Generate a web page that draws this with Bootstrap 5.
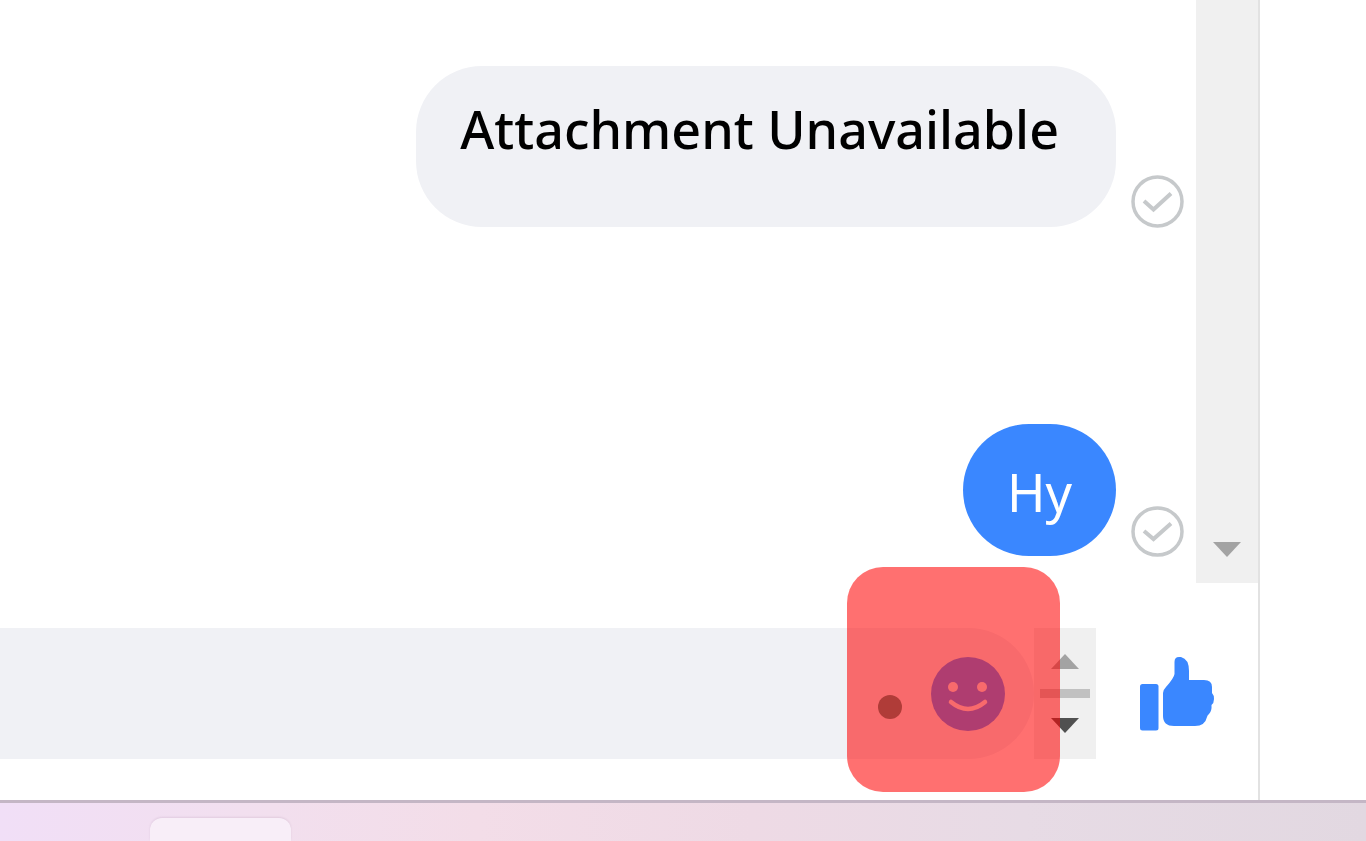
<!DOCTYPE html>
<html lang="en">
<head>
<meta charset="utf-8">
<meta name="viewport" content="width=device-width, initial-scale=1">
<title>Chat</title>
<link rel="stylesheet" href="https://cdn.jsdelivr.net/npm/bootstrap@5.3.0/dist/css/bootstrap.min.css">
<style>
  body { font-family: "Noto Sans", "Open Sans", sans-serif; background: #fff; }
  .chat-panel { border-right: 2px solid #e2e2e2; }
  .side-space { width: 106px; }
  .thread { gap: 197px; padding: 66px 12px 27px 0; }
  .message-line { gap: 15px; }
  .bubble { font-size: 52px; line-height: 72px; padding: 32px 44px 28px; border-radius: 66px; }
  .bubble-grey { background: #f0f1f5; color: #000; font-weight: 500; padding: 27px 57px 62px 44px; }
  .bubble-blue { background: #3a87ff; color: #fff; }
  .sent-mark { width: 53px; height: 53px; flex: none; margin-bottom: -1px; }
  .scroll-track { width: 62px; background: #f0f0f0; padding-bottom: 26px; }
  .composer { padding: 45px 44px 41px 0; }
  .composer-box { height: 131px; background: #f0f1f5; border-radius: 0 66px 66px 0; padding-right: 29px; gap: 29px; }
  .composer-box input { font-size: 52px; min-width: 0; }
  .composer-box input:focus { outline: 0; box-shadow: none; }
  .status-dot { width: 24px; height: 24px; background: #4b8880; margin-top: 27px; flex: none; }
  .box-scroller { width: 62px; height: 131px; background: #f0f0f0; gap: 20px; }
  .scroller-thumb { width: 50px; height: 9px; background: #c1c1c1; }
  .plain-btn { border: 0; padding: 0; background: transparent; line-height: 0; flex: none; }
  .like-btn { margin-left: 44px; }
  .highlight { width: 213px; height: 225px; right: 198px; top: -16px; border-radius: 36px; background: rgba(255,0,0,.56); pointer-events: none; }
  .taskbar { height: 41px; border-top: 3px solid #c4b6c5; padding: 15px 150px 0;
    background: linear-gradient(90deg, #f1dff7 0, #f2dfee 20%, #f3dde8 35%, #eedae5 55%, #e7dbe5 75%, #e2d8e1 100%); }
  .task-tile { width: 141px; border-radius: 12px 12px 0 0; background: #f8eef8; box-shadow: 0 -1px 2px rgba(160,130,160,.2); }
</style>
</head>
<body>
<div class="d-flex flex-column vh-100 overflow-hidden">
  <div class="d-flex flex-grow-1">
    <main class="chat-panel d-flex flex-column flex-grow-1">
      <section class="d-flex flex-grow-1">
        <div class="thread d-flex flex-column justify-content-end flex-grow-1">
          <div class="message-line d-flex justify-content-end align-items-end">
            <div class="bubble bubble-grey">Attachment Unavailable</div>
            <svg class="sent-mark" viewBox="0 0 53 53" fill="none" stroke="#c6c9cb" role="img" aria-label="Sent"><circle cx="26.500" cy="26.500" r="24.500" stroke-width="3.500"/><path d="M13 26l9.500 8.500L40 18.500" stroke-width="4"/></svg>
          </div>
          <div class="message-line d-flex justify-content-end align-items-end">
            <div class="bubble bubble-blue">Hy</div>
            <svg class="sent-mark" viewBox="0 0 53 53" fill="none" stroke="#c6c9cb" role="img" aria-label="Sent"><ellipse cx="26.500" cy="27.500" rx="24.500" ry="23.500" stroke-width="3.500"/><path d="M13 27l9.500 8L40 19.500" stroke-width="4"/></svg>
          </div>
        </div>
        <div class="scroll-track d-flex flex-column justify-content-end align-items-center">
          <button class="plain-btn" type="button" aria-label="Scroll down"><svg width="28" height="15" viewBox="0 0 28 15"><path d="M0 0h28L14 15z" fill="#a3a3a3"/></svg></button>
        </div>
      </section>
      <form class="composer position-relative d-flex align-items-center">
        <div class="composer-box d-flex align-items-center flex-grow-1">
          <input class="border-0 bg-transparent flex-grow-1" type="text" aria-label="Message">
          <span class="status-dot rounded-circle"></span>
          <button class="plain-btn" type="button" aria-label="Choose an emoji">
            <svg width="74" height="74" viewBox="0 0 74 74"><circle cx="37" cy="37" r="37" fill="#4a8cff"/><g fill="#f0f1f5"><circle cx="22" cy="30" r="5"/><circle cx="51" cy="30" r="5"/></g><path d="M20 45Q37 59 54 45" fill="none" stroke="#f0f1f5" stroke-width="4.500" stroke-linecap="round"/></svg>
          </button>
        </div>
        <div class="box-scroller d-flex flex-column align-items-center justify-content-center">
          <button class="plain-btn" type="button" aria-label="Scroll text up"><svg width="28" height="15" viewBox="0 0 28 15"><path d="M0 15h28L14 0z" fill="#a3a3a3"/></svg></button>
          <span class="scroller-thumb"></span>
          <button class="plain-btn" type="button" aria-label="Scroll text down"><svg width="28" height="15" viewBox="0 0 28 15"><path d="M0 0h28L14 15z" fill="#505050"/></svg></button>
        </div>
        <button class="plain-btn like-btn" type="button" aria-label="Send a like">
          <svg width="74" height="74" viewBox="0 0 74 74" fill="#3a87ff"><rect y="27" width="18.500" height="46.500" rx="2.500"/><path d="M34.500 5Q34.500 0 39 0H41Q49 2 49 14V23H64Q72 23 72 30V36Q74 38 74 42Q74 46 71.500 48Q72 54 69 57Q67.500 58 67 60Q65 69 55 69H34Q23 69 23 59V36Q23 33 26 30Q34 21 34.500 17Z"/></svg>
        </button>
        <div class="highlight position-absolute"></div>
      </form>
    </main>
    <aside class="side-space flex-shrink-0"></aside>
  </div>
  <footer class="taskbar d-flex flex-shrink-0"><div class="task-tile"></div></footer>
</div>
<script src="https://cdn.jsdelivr.net/npm/bootstrap@5.3.0/dist/js/bootstrap.bundle.min.js"></script>
</body>
</html>
